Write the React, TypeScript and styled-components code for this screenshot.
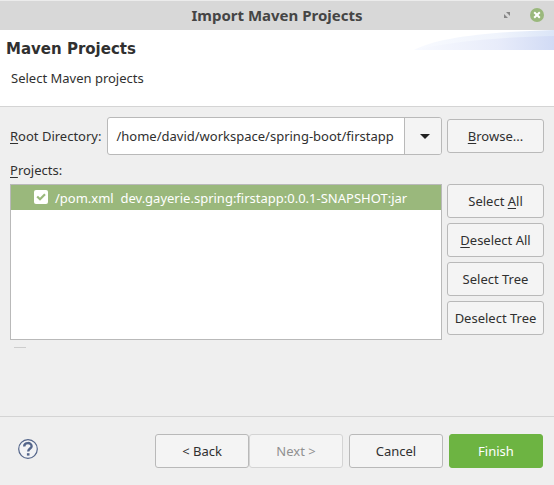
import React from "react";
import styled, { createGlobalStyle } from "styled-components";

const GlobalStyle = createGlobalStyle`
  *, *::before, *::after { box-sizing: border-box; }
  body { margin: 0; background: #efefef; }
  button, input { font: inherit; color: inherit; }
`;

const Dialog = styled.div`
  display: flex;
  flex-direction: column;
  min-height: 100vh;
  background: #efefef;
  color: #303030;
  font: 13px/20px "Noto Sans", sans-serif;
`;

const TitleBar = styled.header`
  display: grid;
  grid-template-columns: 1fr auto 1fr;
  align-items: center;
  height: 30px;
  padding: 0 10px;
  box-shadow: inset 0 1px #ececec;
  background: #d8d8d8;
`;

const WindowTitle = styled.h1`
  grid-column: 2;
  margin: 0;
  color: #454545;
  font-size: 15px;
  line-height: 20px;
  font-weight: 700;
`;

const WindowControls = styled.div`
  display: flex;
  justify-content: flex-end;
  gap: 16px;
`;

const IconButton = styled.button`
  display: flex;
  padding: 0;
  border: 0;
  background: none;
`;

const Banner = styled.section`
  display: flex;
  justify-content: space-between;
  align-items: flex-start;
  height: 77px;
  border-bottom: 1px solid #d4d4d4;
  background: #fff;
`;

const BannerText = styled.div`
  padding: 9px 6px;
`;

const BannerHeading = styled.h2`
  margin: 0;
  font: 700 15px/20px "DejaVu Sans", sans-serif;
`;

const BannerHint = styled.p`
  margin: 9px 5px 0;
`;

const Content = styled.main`
  display: flex;
  flex: 1;
  flex-direction: column;
  padding: 10px 10px 0;
`;

const Row = styled.div<{ $align?: string }>`
  display: flex;
  align-items: ${(p) => p.$align ?? "center"};
  gap: 5px;
`;

const DirectoryField = styled.div`
  display: flex;
  flex: 1;
  align-items: center;
  gap: 6px;
  min-width: 0;
`;

const Combo = styled.div`
  display: flex;
  flex: 1;
  min-width: 0;
  height: 38px;
  border: 1px solid #b9b9b9;
  border-radius: 3px;
  background: #fff;
  overflow: hidden;
`;

const ComboInput = styled.input`
  flex: 1;
  min-width: 0;
  padding: 0 8px;
  border: 0;
  outline: 0;
  background: none;
`;

const ComboArrow = styled.button`
  display: flex;
  align-items: center;
  justify-content: center;
  width: 37px;
  padding: 0 0 0 4px;
  border: 0;
  border-left: 1px solid #b9b9b9;
  background: #f4f4f4;
`;

const Button = styled.button<{ $width?: number; $primary?: boolean }>`
  width: ${(p) => p.$width ?? 94}px;
  height: 34px;
  padding: 0;
  border: 1px solid ${(p) => (p.$primary ? "#6db442" : "#b9b9b9")};
  border-radius: 3px;
  background: ${(p) => (p.$primary ? "#6db442" : "#f4f4f4")};
  color: ${(p) => (p.$primary ? "#fff" : "#303030")};
  white-space: nowrap;

  &:disabled {
    border-color: #d4d4d4;
    color: #909090;
  }
`;

const Mnemonic = styled.span`
  text-decoration: underline;
  text-underline-offset: 2px;
  text-decoration-skip-ink: none;
`;

const ProjectsLabel = styled.div`
  margin: 5px 0 4px;
`;

const ProjectTree = styled.div`
  flex: 1;
  min-width: 0;
  min-height: 156px;
  border: 1px solid #b9b9b9;
  background: #fff;
`;

const ProjectItem = styled.label`
  display: flex;
  align-items: center;
  height: 25px;
  padding-left: 23px;
  gap: 7px;
  background: #9ab87c;
  color: #fff;
  white-space: pre;
`;

const CheckSlot = styled.span`
  display: grid;
  width: 14px;
  height: 14px;
  margin-bottom: 2px;
  > * { grid-area: 1 / 1; }
`;

const Check = styled.input`
  appearance: none;
  width: 14px;
  height: 14px;
  margin: 0;
  border-radius: 2px;
  background: #fff;

  &:not(:checked) + svg { visibility: hidden; }
`;

const ButtonStack = styled.div`
  display: flex;
  flex-direction: column;
  gap: 5px;
`;

const SectionMark = styled.hr`
  width: 12px;
  height: 1px;
  margin: 7px 4px;
  border: 0;
  background: #cdcdcd;
`;

const Footer = styled.footer`
  display: flex;
  align-items: flex-start;
  height: 69px;
  padding: 17px 11px 0 18px;
  border-top: 1px solid #d4d4d4;
`;

const HelpButton = styled(IconButton)`
  padding-top: 5px;
`;

const FooterActions = styled.div`
  display: flex;
  gap: 6px;
  margin-left: auto;
`;

const Pager = styled.div`
  display: flex;
`;

const BannerArt = () => (
  <svg width="140" height="20" viewBox="0 0 140 20" aria-hidden="true">
    <defs>
      <linearGradient id="outer">
        <stop offset="0" stopColor="#f8faff" />
        <stop offset="0.6" stopColor="#f0f4fc" />
        <stop offset="1" stopColor="#dbe5f7" />
      </linearGradient>
      <linearGradient id="inner">
        <stop offset="0" stopColor="#f8faff" />
        <stop offset="0.6" stopColor="#e8ecfa" />
        <stop offset="1" stopColor="#d1dbf5" />
      </linearGradient>
    </defs>
    <path d="M0 20C22 8 70 2 140 0V20Z" fill="url(#outer)" />
    <path d="M0 20C35 12 82 7 140 6V20Z" fill="url(#inner)" />
  </svg>
);

export default function App() {
  return (
    <Dialog>
      <GlobalStyle />
      <TitleBar>
        <WindowTitle>Import Maven Projects</WindowTitle>
        <WindowControls>
          <IconButton aria-label="Maximize">
            <svg width="14" height="14" viewBox="0 0 14 14" fill="#858585">
              <path d="M6 4h4v4zM4 6v4h4z" />
            </svg>
          </IconButton>
          <IconButton aria-label="Close">
            <svg width="14" height="14" viewBox="0 0 14 14">
              <circle cx="7" cy="7" r="7" fill="#9ab87c" />
              <path d="M4.2 4.2l5.6 5.6M9.8 4.2l-5.6 5.6" stroke="#fff" strokeWidth="2" />
            </svg>
          </IconButton>
        </WindowControls>
      </TitleBar>
      <Banner>
        <BannerText>
          <BannerHeading>Maven Projects</BannerHeading>
          <BannerHint>Select Maven projects</BannerHint>
        </BannerText>
        <BannerArt />
      </Banner>
      <Content>
        <Row>
          <DirectoryField>
            <label htmlFor="root"><Mnemonic>R</Mnemonic>oot Directory:</label>
            <Combo>
              <ComboInput id="root" defaultValue="/home/david/workspace/spring-boot/firstapp" />
              <ComboArrow aria-label="Show recent directories">
                <svg width="10" height="5" viewBox="0 0 10 5"><path d="M0 0h10L5 5z" fill="#222" /></svg>
              </ComboArrow>
            </Combo>
          </DirectoryField>
          <Button $width={97}><Mnemonic>B</Mnemonic>rowse...</Button>
        </Row>
        <ProjectsLabel id="projects"><Mnemonic>P</Mnemonic>rojects:</ProjectsLabel>
        <Row $align="stretch">
          <ProjectTree role="group" aria-labelledby="projects">
            <ProjectItem>
              <CheckSlot>
                <Check type="checkbox" defaultChecked />
                <svg width="14" height="14" viewBox="0 0 14 14" fill="none" aria-hidden="true">
                  <path d="M3.2 6.5L6 9.2L11 4.2" stroke="#9ab87c" strokeWidth="2.2" />
                </svg>
              </CheckSlot>
              {"/pom.xml  dev.gayerie.spring:firstapp:0.0.1-SNAPSHOT:jar"}
            </ProjectItem>
          </ProjectTree>
          <ButtonStack>
            <Button $width={97}>Select <Mnemonic>A</Mnemonic>ll</Button>
            <Button $width={97}><Mnemonic>D</Mnemonic>eselect All</Button>
            <Button $width={97}>Select Tree</Button>
            <Button $width={97}>Deselect Tree</Button>
          </ButtonStack>
        </Row>
        <SectionMark />
      </Content>
      <Footer>
        <HelpButton aria-label="Help">
          <svg width="20" height="20" viewBox="0 0 20 20" fill="none" stroke="#53658a">
            <circle cx="10" cy="10" r="9.3" fill="#f2f3f5" strokeWidth="1.2" />
            <path d="M6.2 7.4C6.2 3 13.6 3 13.6 7.2C13.6 9.6 10.2 9.6 10.2 12.6" strokeWidth="2.4" />
            <path d="M10.2 14.2v2.4" strokeWidth="2.6" />
          </svg>
        </HelpButton>
        <FooterActions>
          <Pager>
            <Button>&lt; Back</Button>
            <Button disabled>Next &gt;</Button>
          </Pager>
          <Button>Cancel</Button>
          <Button $primary>Finish</Button>
        </FooterActions>
      </Footer>
    </Dialog>
  );
}
